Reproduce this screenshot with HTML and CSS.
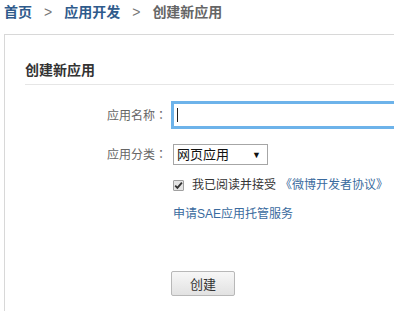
FILE: index.html
```html
<!DOCTYPE html>
<html>
<head>
    <meta charset="utf-8">
    <link rel="stylesheet" href="styles.css">
</head>
<body>
    <div class="crumbs">
        <a href="#">首页</a>
        <span class="sep">&gt;</span>
        <a href="#">应用开发</a>
        <span class="sep">&gt;</span>
        <span class="current">创建新应用</span>
    </div>

    <div class="panel">
        <h2 class="panel-title">创建新应用</h2>

        <div class="form">
            <div class="row">
                <label class="label">应用名称<span class="colon">：</span></label>
                <div class="field"><span class="caret"></span></div>
            </div>
            <div class="row row-select">
                <label class="label">应用分类<span class="colon">：</span></label>
                <div class="select">
                    <span>网页应用</span>
                    <span class="arrow">&#9660;</span>
                </div>
            </div>
            <div class="row row-check">
                <span class="label"></span>
                <span class="check">
                    <svg width="9" height="9" viewBox="0 0 9 9"><path d="M1.2 4.6 L3.4 6.9 L7.9 1.6" fill="none" stroke="#333" stroke-width="1.8"/></svg>
                </span>
                <span class="agree">我已阅读并接受</span>
                <a href="#" class="link link-doc">《微博开发者协议》</a>
            </div>
            <div class="row row-sae">
                <span class="label"></span>
                <a href="#" class="link">申请SAE应用托管服务</a>
            </div>
            <div class="row row-btn">
                <span class="label"></span>
                <button class="btn">创建</button>
            </div>
        </div>
    </div>
</body>
</html>
```

FILE: styles.css
```css
html,
body {
    margin: 0;
    height: 100%;
    overflow: hidden;
    background: #fff;
    font-family: "Liberation Sans", "Noto Sans CJK SC", sans-serif;
}

a {
    text-decoration: none;
}

.crumbs {
    height: 24px;
    line-height: 24px;
    padding-left: 4px;
    margin-bottom: 10px;
    font-size: 14px;
    font-weight: bold;
    display: flex;
}
.crumbs a {
    color: #2f5b8c;
}
.crumbs .sep {
    color: #777;
    font-weight: normal;
    margin: 0 12px 0 12px;
}
.crumbs .current {
    color: #666;
}

.panel {
    margin-left: 4px;
    border-top: 1px solid #d8d8d8;
    border-left: 1px solid #d8d8d8;
    height: calc(100vh - 35px);
    overflow: hidden;
}

.panel-title {
    margin: 0 0 0 20px;
    padding: 25px 0 4px 0;
    font-size: 14px;
    line-height: 20px;
    color: #333;
    border-bottom: 1px solid #e6e6e6;
}

.form {
    margin-top: 16px;
    display: flex;
    flex-direction: column;
}

.row {
    display: flex;
    align-items: center;
    font-size: 12px;
    line-height: 20px;
}
.label {
    width: 162px;
    flex: none;
    text-align: right;
    color: #666;
    margin-right: 4px;
}
.colon {
    font-family: "Noto Sans CJK TC", sans-serif;
}

.field {
    flex: none;
    width: 240px;
    height: 22px;
    border: 3px solid #6db3ea;
    display: flex;
    align-items: center;
    padding-left: 3px;
}
.caret {
    width: 1px;
    height: 14px;
    background: #222;
}

.row-select {
    margin-top: 15px;
}
.select {
    margin-left: 2px;
    width: 90px;
    height: 19px;
    border: 1px solid #a6a6a6;
    display: flex;
    align-items: center;
    justify-content: space-between;
    padding: 0 0 0 3px;
    font-size: 13px;
    color: #111;
}
.select .arrow {
    font-size: 9px;
    margin-right: 6px;
    color: #111;
}

.row-check {
    margin-top: 10px;
}
.check {
    margin-left: 2px;
    width: 9px;
    height: 9px;
    border: 1px solid #a0a0a0;
    background: #e4e4e4;
    border-radius: 1px;
    display: flex;
}
.agree {
    margin-left: 8px;
    color: #333;
}
.link {
    color: #3a6b9e;
}
.link-doc {
    margin-left: 4px;
}

.row-sae {
    margin-top: 9px;
}
.row-sae .link {
    margin-left: 2px;
}

.row-btn {
    margin-top: 47px;
}
.btn {
    width: 64px;
    height: 25px;
    border: 1px solid #b8b8b8;
    border-radius: 2px;
    background: linear-gradient(#f7f7f7, #e2e2e2);
    font-family: "Liberation Sans", "Noto Sans CJK SC", sans-serif;
    font-size: 13px;
    color: #333;
    padding: 0;
}
```
